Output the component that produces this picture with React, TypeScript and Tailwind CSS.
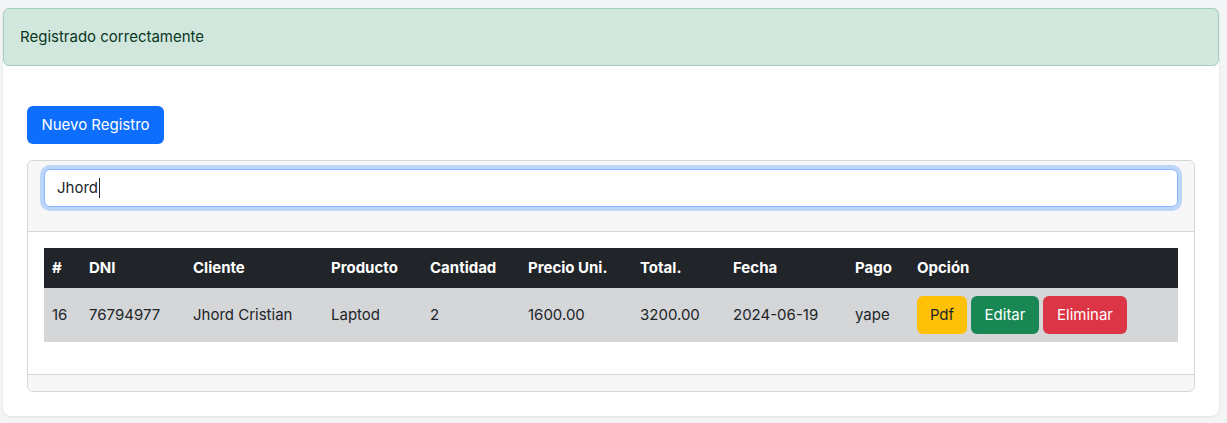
import React from "react";

const rows = [
  {
    id: 16,
    dni: "76794977",
    cliente: "Jhord Cristian",
    producto: "Laptod",
    cantidad: 2,
    precio: "1600.00",
    total: "3200.00",
    fecha: "2024-06-19",
    pago: "yape",
  },
];

export default function App() {
  return (
    <div
      className="min-h-[423px] w-full bg-[#f3f4f6] pt-2 pb-2 pl-[3px] pr-[8px] text-[16px] text-[#212529]"
      style={{ fontFamily: "Inter, 'Noto Sans', sans-serif" }}
    >
      <div className="rounded-lg bg-white shadow-[0_1px_3px_rgba(0,0,0,0.08)]">
        {/* alerta */}
        <div className="rounded-md border border-[#a3cfbb] bg-[#d1e7dd] px-4 py-4 leading-6 text-[#0a3622] text-[15px]">
          Registrado correctamente
        </div>

        <div className="px-6 pb-6 pt-[40px]">
          <button className="mb-4 h-[38px] w-[137px] rounded-md bg-[#0d6efd] text-[15px] text-white">
            Nuevo Registro
          </button>

          <div className="rounded-md border border-[#d6d6d6]">
            {/* cabecera con buscador */}
            <div className="rounded-t-md border-b border-[#d6d6d6] bg-[#f7f7f7] px-4 pt-2 pb-6">
              <div className="flex h-[38px] items-center rounded-md border border-[#86b7fe] bg-white px-3 shadow-[0_0_0_4px_rgba(13,110,253,0.25)] text-[15px]">
                <span>Jhord</span>
                <span className="ml-px inline-block h-[20px] w-px bg-[#212529]" />
              </div>
            </div>

            {/* tabla */}
            <div className="p-4">
              <table className="mb-4 w-full border-collapse text-left text-[15px]">
                <colgroup>
                  <col className="w-[37px]" />
                  <col className="w-[104px]" />
                  <col className="w-[138px]" />
                  <col className="w-[99px]" />
                  <col className="w-[98px]" />
                  <col className="w-[112px]" />
                  <col className="w-[93px]" />
                  <col className="w-[122px]" />
                  <col className="w-[62px]" />
                  <col />
                </colgroup>
                <thead>
                  <tr className="h-[40px] bg-[#212529] text-white">
                    <th className="px-2 font-bold">#</th>
                    <th className="px-2 font-bold">DNI</th>
                    <th className="px-2 font-bold">Cliente</th>
                    <th className="px-2 font-bold">Producto</th>
                    <th className="px-2 font-bold">Cantidad</th>
                    <th className="px-2 font-bold">Precio Uni.</th>
                    <th className="px-2 font-bold">Total.</th>
                    <th className="px-2 font-bold">Fecha</th>
                    <th className="px-2 font-bold">Pago</th>
                    <th className="px-2 font-bold">Opción</th>
                  </tr>
                </thead>
                <tbody>
                  {rows.map((r) => (
                    <tr key={r.id} className="h-[54px] bg-[#d5d6d8]">
                      <td className="px-2">{r.id}</td>
                      <td className="px-2">{r.dni}</td>
                      <td className="px-2">{r.cliente}</td>
                      <td className="px-2">{r.producto}</td>
                      <td className="px-2">{r.cantidad}</td>
                      <td className="px-2">{r.precio}</td>
                      <td className="px-2">{r.total}</td>
                      <td className="px-2">{r.fecha}</td>
                      <td className="px-2">{r.pago}</td>
                      <td className="px-2">
                        <div className="flex gap-1">
                          <button className="h-[38px] w-[50px] rounded-md bg-[#ffc107] text-[#212529]">
                            Pdf
                          </button>
                          <button className="h-[38px] w-[68px] rounded-md bg-[#198754] text-white">
                            Editar
                          </button>
                          <button className="h-[38px] w-[84px] rounded-md bg-[#dc3545] text-white">
                            Eliminar
                          </button>
                        </div>
                      </td>
                    </tr>
                  ))}
                </tbody>
              </table>
            </div>

            {/* pie vacío */}
            <div className="h-[17px] rounded-b-md border-t border-[#d6d6d6] bg-[#f7f7f7]" />
          </div>
        </div>
      </div>
    </div>
  );
}
